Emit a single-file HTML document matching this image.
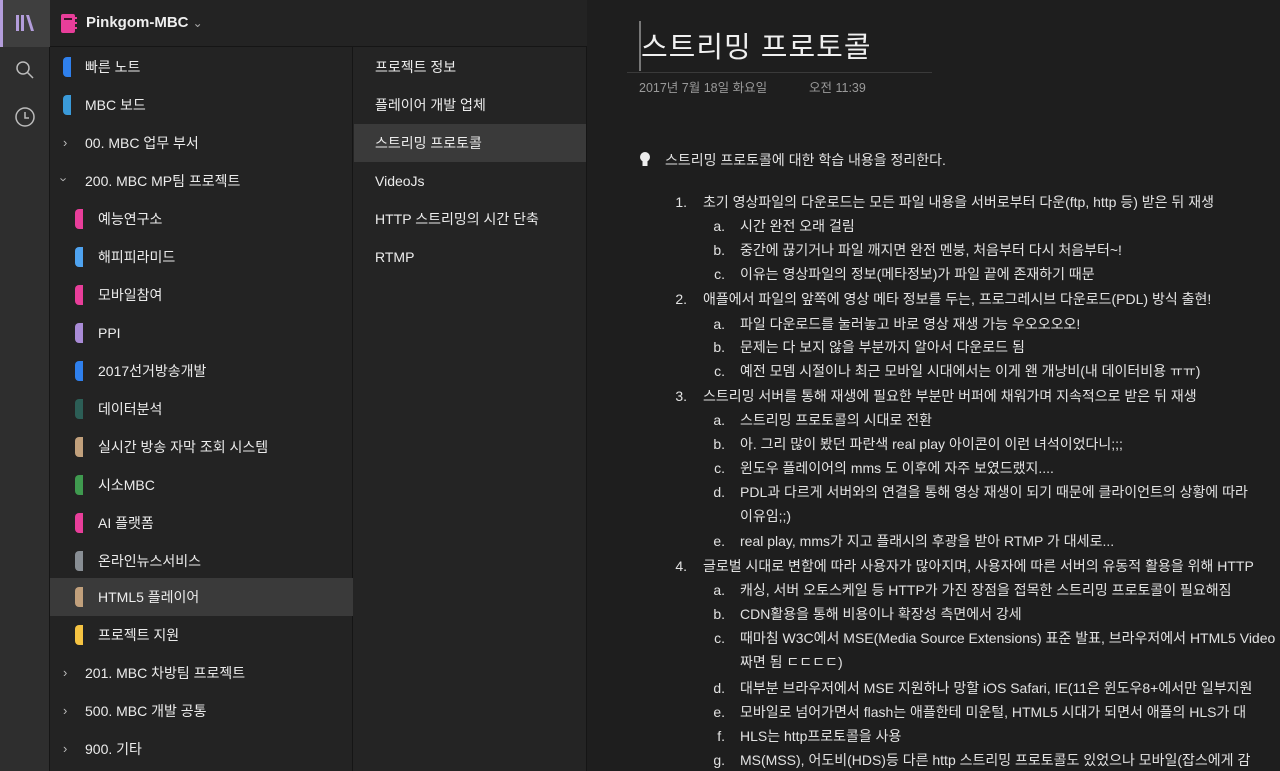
<!DOCTYPE html>
<html><head><meta charset="utf-8"><style>
*{margin:0;padding:0;box-sizing:border-box}
body{width:1280px;height:771px;overflow:hidden;background:#1e1e1e;font-family:"Liberation Sans","Noto Sans CJK KR",sans-serif;color:#e6e6e6;position:relative}
.rail{position:absolute;left:0;top:0;width:50px;height:771px;background:#2e2e2e;border-right:1px solid #161616}
.rail .sel{position:absolute;left:0;top:0;width:50px;height:47px;background:#3f3f3f;border-left:3px solid #b39ddb}
.sec{position:absolute;left:50px;top:0;width:303px;height:771px;background:#232323;border-right:1px solid #151515}
.hdr{position:absolute;left:50px;top:0;width:537px;height:47px;background:#232323;border-bottom:1px solid #151515}
.pages{position:absolute;left:353px;top:47px;width:234px;height:724px;background:#242424;border-right:1px solid #151515}
.row{position:absolute;height:38px;line-height:38px;font-size:14px;color:#ececec;white-space:nowrap}
.tab{position:absolute;top:9px;width:8px;height:20px;border-radius:4px 0 0 4px}
.chev{position:absolute;font-size:13px;color:#bbb}
.c{position:absolute;font-size:14px;color:#e2e2e2;white-space:nowrap;line-height:20px}
.n{position:absolute;font-size:14px;color:#e2e2e2;text-align:right;width:20px;line-height:20px}
</style></head><body>
<div class="rail"><div class="sel"></div>
<svg style="position:absolute;left:15px;top:14px" width="20" height="18"><rect x="1" y="1" width="3" height="16" fill="#b39ddb"/><rect x="6" y="1" width="3" height="16" fill="#b39ddb"/><polygon points="11,1 14,1 19,17 16,17" fill="#b39ddb"/></svg>
<svg style="position:absolute;left:15px;top:60px" width="20" height="20" fill="none" stroke="#bbb" stroke-width="1.5"><circle cx="8" cy="8" r="6"/><line x1="12.5" y1="12.5" x2="18" y2="18"/></svg>
<svg style="position:absolute;left:14px;top:106px" width="22" height="22" fill="none" stroke="#bbb" stroke-width="1.5"><circle cx="11" cy="11" r="9"/><polyline points="11,6 11,12 15,12"/></svg>
</div>
<div class="sec"></div>
<div class="hdr">
<svg style="position:absolute;left:11px;top:14px" width="16" height="19"><rect x="0" y="0" width="14" height="19" rx="2" fill="#e83e9a"/><rect x="3" y="4" width="8" height="2" fill="#3a1528"/><rect x="14" y="3" width="2" height="2" fill="#e83e9a"/><rect x="14" y="8" width="2" height="2" fill="#e83e9a"/><rect x="14" y="13" width="2" height="2" fill="#e83e9a"/></svg>
<div style="position:absolute;left:36px;top:14px;font-size:15px;font-weight:bold;color:#eee">Pinkgom-MBC <span style="font-weight:normal;color:#aaa;font-size:12px">&#8964;</span></div>
</div>
<div style="position:absolute;left:50px;top:578px;width:303px;height:38px;background:#3a3a3a"></div>

<div class="row" style="left:85px;top:48px">빠른 노트</div><div class="tab" style="left:63px;top:57px;background:#2f80ed"></div>
<div class="row" style="left:85px;top:86px">MBC 보드</div><div class="tab" style="left:63px;top:95px;background:#3a9ad9"></div>
<div class="row" style="left:85px;top:124px">00. MBC 업무 부서</div><div class="chev" style="left:63px;top:135px">&#8250;</div>
<div class="row" style="left:85px;top:162px">200. MBC MP팀 프로젝트</div><div class="chev" style="left:62px;top:172px;transform:rotate(90deg)">&#8250;</div>
<div class="row" style="left:98px;top:200px">예능연구소</div><div class="tab" style="left:75px;top:209px;background:#e83e9a"></div>
<div class="row" style="left:98px;top:238px">해피피라미드</div><div class="tab" style="left:75px;top:247px;background:#4fa3f0"></div>
<div class="row" style="left:98px;top:276px">모바일참여</div><div class="tab" style="left:75px;top:285px;background:#e83e9a"></div>
<div class="row" style="left:98px;top:314px">PPI</div><div class="tab" style="left:75px;top:323px;background:#a98bd6"></div>
<div class="row" style="left:98px;top:352px">2017선거방송개발</div><div class="tab" style="left:75px;top:361px;background:#2f80ed"></div>
<div class="row" style="left:98px;top:390px">데이터분석</div><div class="tab" style="left:75px;top:399px;background:#2c5e56"></div>
<div class="row" style="left:98px;top:428px">실시간 방송 자막 조회 시스템</div><div class="tab" style="left:75px;top:437px;background:#c1a07c"></div>
<div class="row" style="left:98px;top:466px">시소MBC</div><div class="tab" style="left:75px;top:475px;background:#3f9a4f"></div>
<div class="row" style="left:98px;top:504px">AI 플랫폼</div><div class="tab" style="left:75px;top:513px;background:#e83e9a"></div>
<div class="row" style="left:98px;top:542px">온라인뉴스서비스</div><div class="tab" style="left:75px;top:551px;background:#888e94"></div>
<div class="row" style="left:98px;top:578px">HTML5 플레이어</div><div class="tab" style="left:75px;top:587px;background:#c1a07c"></div>
<div class="row" style="left:98px;top:616px">프로젝트 지원</div><div class="tab" style="left:75px;top:625px;background:#f5c342"></div>
<div class="row" style="left:85px;top:654px">201. MBC 차방팀 프로젝트</div><div class="chev" style="left:63px;top:665px">&#8250;</div>
<div class="row" style="left:85px;top:692px">500. MBC 개발 공통</div><div class="chev" style="left:63px;top:703px">&#8250;</div>
<div class="row" style="left:85px;top:730px">900. 기타</div><div class="chev" style="left:63px;top:741px">&#8250;</div>

<div class="pages"></div>
<div style="position:absolute;left:354px;top:124px;width:232px;height:38px;background:#3a3a3a"></div>
<div class="row" style="left:375px;top:48px">프로젝트 정보</div>
<div class="row" style="left:375px;top:86px">플레이어 개발 업체</div>
<div class="row" style="left:375px;top:124px">스트리밍 프로토콜</div>
<div class="row" style="left:375px;top:162px">VideoJs</div>
<div class="row" style="left:375px;top:200px">HTTP 스트리밍의 시간 단축</div>
<div class="row" style="left:375px;top:238px">RTMP</div>

<div style="position:absolute;left:639px;top:21px;width:2px;height:50px;background:#777"></div>
<div style="position:absolute;left:641px;top:24px;font-size:29px;color:#f0f0f0;letter-spacing:1px">스트리밍 프로토콜</div>
<div style="position:absolute;left:627px;top:72px;width:305px;height:1px;background:#3a3a3a"></div>
<div style="position:absolute;left:639px;top:77px;font-size:12.5px;color:#9a9a9a">2017년 7월 18일 화요일</div>
<div style="position:absolute;left:809px;top:77px;font-size:12.5px;color:#9a9a9a">오전 11:39</div>

<svg style="position:absolute;left:639px;top:151px" width="12" height="17"><circle cx="6" cy="6" r="5" fill="#eee"/><rect x="3.5" y="9" width="5" height="6" fill="#eee"/></svg>
<div class="c" style="left:665px;top:150px">스트리밍 프로토콜에 대한 학습 내용을 정리한다.</div>

<div class="n" style="left:667px;top:192px">1.</div><div class="c" style="left:703px;top:192px">초기 영상파일의 다운로드는 모든 파일 내용을 서버로부터 다운(ftp, http 등) 받은 뒤 재생</div>
<div class="n" style="left:705px;top:216px">a.</div><div class="c" style="left:740px;top:216px">시간 완전 오래 걸림</div>
<div class="n" style="left:705px;top:240px">b.</div><div class="c" style="left:740px;top:240px">중간에 끊기거나 파일 깨지면 완전 멘붕, 처음부터 다시 처음부터~!</div>
<div class="n" style="left:705px;top:264px">c.</div><div class="c" style="left:740px;top:264px">이유는 영상파일의 정보(메타정보)가 파일 끝에 존재하기 때문</div>
<div class="n" style="left:667px;top:289px">2.</div><div class="c" style="left:703px;top:289px">애플에서 파일의 앞쪽에 영상 메타 정보를 두는, 프로그레시브 다운로드(PDL) 방식 출현!</div>
<div class="n" style="left:705px;top:314px">a.</div><div class="c" style="left:740px;top:314px">파일 다운로드를 눌러놓고 바로 영상 재생 가능 우오오오오!</div>
<div class="n" style="left:705px;top:337px">b.</div><div class="c" style="left:740px;top:337px">문제는 다 보지 않을 부분까지 알아서 다운로드 됨</div>
<div class="n" style="left:705px;top:361px">c.</div><div class="c" style="left:740px;top:361px">예전 모뎀 시절이나 최근 모바일 시대에서는 이게 왠 개낭비(내 데이터비용 ㅠㅠ)</div>
<div class="n" style="left:667px;top:386px">3.</div><div class="c" style="left:703px;top:386px">스트리밍 서버를 통해 재생에 필요한 부분만 버퍼에 채워가며 지속적으로 받은 뒤 재생</div>
<div class="n" style="left:705px;top:410px">a.</div><div class="c" style="left:740px;top:410px">스트리밍 프로토콜의 시대로 전환</div>
<div class="n" style="left:705px;top:434px">b.</div><div class="c" style="left:740px;top:434px">아. 그리 많이 봤던 파란색 real play 아이콘이 이런 녀석이었다니;;;</div>
<div class="n" style="left:705px;top:458px">c.</div><div class="c" style="left:740px;top:458px">윈도우 플레이어의 mms 도 이후에 자주 보였드랬지....</div>
<div class="n" style="left:705px;top:482px">d.</div><div class="c" style="left:740px;top:482px">PDL과 다르게 서버와의 연결을 통해 영상 재생이 되기 때문에 클라이언트의 상황에 따라</div>
<div class="c" style="left:740px;top:506px">이유임;;)</div>
<div class="n" style="left:705px;top:531px">e.</div><div class="c" style="left:740px;top:531px">real play, mms가 지고 플래시의 후광을 받아 RTMP 가 대세로...</div>
<div class="n" style="left:667px;top:556px">4.</div><div class="c" style="left:703px;top:556px">글로벌 시대로 변함에 따라 사용자가 많아지며, 사용자에 따른 서버의 유동적 활용을 위해 HTTP</div>
<div class="n" style="left:705px;top:580px">a.</div><div class="c" style="left:740px;top:580px">캐싱, 서버 오토스케일 등 HTTP가 가진 장점을 접목한 스트리밍 프로토콜이 필요해짐</div>
<div class="n" style="left:705px;top:604px">b.</div><div class="c" style="left:740px;top:604px">CDN활용을 통해 비용이나 확장성 측면에서 강세</div>
<div class="n" style="left:705px;top:628px">c.</div><div class="c" style="left:740px;top:628px">때마침 W3C에서 MSE(Media Source Extensions) 표준 발표, 브라우저에서 HTML5 Video</div>
<div class="c" style="left:740px;top:652px">짜면 됨 ㄷㄷㄷㄷ)</div>
<div class="n" style="left:705px;top:678px">d.</div><div class="c" style="left:740px;top:678px">대부분 브라우저에서 MSE 지원하나 망할 iOS Safari, IE(11은 윈도우8+에서만 일부지원</div>
<div class="n" style="left:705px;top:702px">e.</div><div class="c" style="left:740px;top:702px">모바일로 넘어가면서 flash는 애플한테 미운털, HTML5 시대가 되면서 애플의 HLS가 대</div>
<div class="n" style="left:705px;top:726px">f.</div><div class="c" style="left:740px;top:726px">HLS는 http프로토콜을 사용</div>
<div class="n" style="left:705px;top:750px">g.</div><div class="c" style="left:740px;top:750px">MS(MSS), 어도비(HDS)등 다른 http 스트리밍 프로토콜도 있었으나 모바일(잡스에게 감</div>
</body></html>
